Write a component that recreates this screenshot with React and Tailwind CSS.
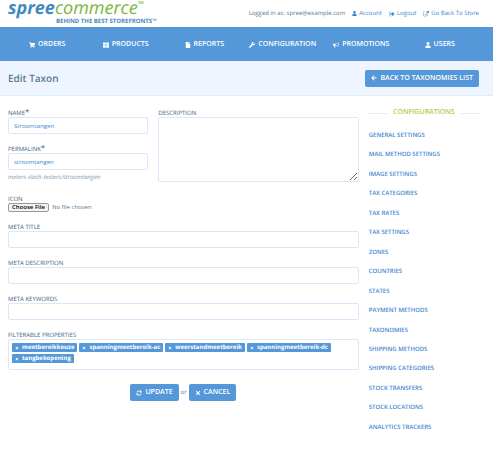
import React from "react";
import { FaShoppingCart, FaThLarge, FaFile, FaWrench, FaUser, FaArrowLeft, FaTimes } from "react-icons/fa";

function Glyph({ d, className }) {
  return (
    <svg viewBox="0 0 1792 1792" fill="currentColor" aria-hidden="true" className={className}>
      <path d={d} />
    </svg>
  );
}

const REFRESH =
  "M1639 1056q0 5-1 7-64 268-268 434.5t-478 166.5q-146 0-282.5-55t-243.5-157l-129 129q-19 19-45 19t-45-19-19-45v-448q0-26 19-45t45-19h448q26 0 45 19t19 45-19 45l-137 137q71 66 161 102t187 36q134 0 250-65t186-179q11-17 53-117 8-23 30-23h192q13 0 22.5 9.5t9.5 22.5zm25-800v448q0 26-19 45t-45 19h-448q-26 0-45-19t-19-45 19-45l138-138q-148-137-349-137-134 0-250 65t-186 179q-11 17-53 117-8 23-30 23h-199q-13 0-22.5-9.5t-9.5-22.5v-7q65-268 270-434.5t480-166.5q146 0 284 55.5t245 156.5l130-129q19-19 45-19t45 19 19 45z";
const EXTERNAL =
  "M1408 928v320q0 119-84.5 203.5t-203.5 84.5h-832q-119 0-203.5-84.5t-84.5-203.5v-832q0-119 84.5-203.5t203.5-84.5h704q14 0 23 9t9 23v64q0 14-9 23t-23 9h-704q-66 0-113 47t-47 113v832q0 66 47 113t113 47h832q66 0 113-47t47-113v-320q0-14 9-23t23-9h64q14 0 23 9t9 23zm384-864v512q0 26-19 45t-45 19-45-19l-176-176-652 652q-10 10-23 10t-23-10l-114-114q-10-10-10-23t10-23l652-652-176-176q-19-19-19-45t19-45 45-19h512q26 0 45 19t19 45z";
const SIGN_OUT =
  "M704 1440q0 4 1 20t.5 26.5-3 23.5-10 19.5-20.5 6.5h-320q-119 0-203.5-84.5t-84.5-203.5v-704q0-119 84.5-203.5t203.5-84.5h320q13 0 22.5 9.5t9.5 22.5q0 4 1 20t.5 26.5-3 23.5-10 19.5-20.5 6.5h-320q-66 0-113 47t-47 113v704q0 66 47 113t113 47h312l11.5 1 11.5 3 8 5.5 7 9 2 13.5zm928-544q0 26-19 45l-544 544q-19 19-45 19t-45-19-19-45v-288h-448q-26 0-45-19t-19-45v-384q0-26 19-45t45-19h448v-288q0-26 19-45t45-19 45 19l544 544q19 19 19 45z";
const BULLHORN =
  "M1664 640q53 0 90.5 37.5t37.5 90.5-37.5 90.5-90.5 37.5v384q0 52-38 90t-90 38q-417-347-812-380-58 19-91 66t-31 100.5 40 92.5q-20 33-23 65.5t6 58 33.5 55 48 50 61.5 50.5q-29 58-111.5 83t-168.5 11.5-132-55.5q-7-23-29.5-87.5t-32-94.5-23-89-15-101 3.5-98.5 22-110.5h-122q-66 0-113-47t-47-113v-192q0-66 47-113t113-47h480q435 0 896-384 52 0 90 38t38 90v384zm-128 604v-954q-394 302-768 343v270q377 42 768 341z";

const Bullhorn = ({ className }) => <Glyph d={BULLHORN} className={className} />;

const NAV = [
  ["Orders", FaShoppingCart],
  ["Products", FaThLarge],
  ["Reports", FaFile],
  ["Configuration", FaWrench],
  ["Promotions", Bullhorn],
  ["Users", FaUser],
];

const SETTINGS = [
  "General Settings",
  "Mail Method Settings",
  "Image Settings",
  "Tax Categories",
  "Tax Rates",
  "Tax Settings",
  "Zones",
  "Countries",
  "States",
  "Payment Methods",
  "Taxonomies",
  "Shipping Methods",
  "Shipping Categories",
  "Stock Transfers",
  "Stock Locations",
  "Analytics Trackers",
];

const TAGS = ["meetbereikkeuze", "spanningmeetbereik-ac", "weerstandmeetbereik", "spanningmeetbereik-dc", "tangbekopening"];

const labelClass = "block h-[10px] text-[6px] leading-[12px] font-normal uppercase text-[#41657f]";
const inputClass =
  "block h-[17px] w-full rounded-xs border border-[#d9e8f8] bg-white px-[5px] text-[6px] text-[#3d86d0] outline-none";
const buttonClass =
  "flex h-[17px] items-center gap-[3px] rounded-xs bg-[#5498da] px-[6px] text-[7px] font-semibold uppercase text-white";

function Field({ id, label, required, value }) {
  return (
    <div>
      <label htmlFor={id} className={labelClass}>
        {label}
        {required && <span className="text-[8px] leading-none">*</span>}
      </label>
      <input id={id} type="text" defaultValue={value} className={inputClass} />
    </div>
  );
}

export default function App() {
  return (
    <div className="min-h-screen bg-white font-['Open_Sans',sans-serif] text-[#5a7a94] [text-rendering:geometricPrecision]">
      <header className="flex h-[27px] justify-between pr-3.5 pl-2">
        <a href="#" className="flex flex-col">
          <span className="flex h-4 items-start text-[18px] leading-[16px] italic">
            <span className="font-bold text-[#4389bd]">spree</span>
            <span className="text-[#7cb642]">commerce</span>
            <span className="text-[8px] leading-[10px] text-[#7cb642] not-italic">™</span>
          </span>
          <span className="pl-12 text-[6px] leading-[10px] font-bold text-[#4389bd]">BEHIND THE BEST STOREFRONTS™</span>
        </a>
        <div className="flex items-center gap-[7px] text-[6px]">
          <span>Logged in as: spree@example.com</span>
          <a href="#" className="flex items-center gap-0.5 text-[#3d86d0]">
            <FaUser className="size-[5px]" />
            Account
          </a>
          <a href="#" className="flex items-center gap-0.5 text-[#3d86d0]">
            <Glyph d={SIGN_OUT} className="size-[6px]" />
            Logout
          </a>
          <a href="#" className="flex items-center gap-0.5 text-[#3d86d0]">
            <Glyph d={EXTERNAL} className="size-[6px]" />
            Go Back To Store
          </a>
        </div>
      </header>

      <nav className="flex h-[34px] bg-[#5498da] pt-0.5 pr-3.5 pl-2">
        {NAV.map(([name, Icon]) => (
          <a
            key={name}
            href="#"
            className="flex flex-1 basis-0 items-center justify-center gap-[3px] text-[7px] font-semibold text-white uppercase"
          >
            <Icon className="size-[6px]" />
            {name}
          </a>
        ))}
      </nav>

      <div className="flex h-[35px] items-center justify-between border-b border-[#e0edf8] bg-[#eff5fe] pr-3.5 pl-2">
        <h1 className="text-[10px] font-semibold">Edit Taxon</h1>
        <button type="button" className={buttonClass}>
          <FaArrowLeft className="size-[6px]" />
          Back to taxonomies list
        </button>
      </div>

      <main className="grid grid-cols-[35fr_11fr] gap-2.5 pt-[11px] pr-3.5 pl-2">
        <form className="pb-8" onSubmit={(e) => e.preventDefault()}>
          <div className="grid grid-cols-[7fr_10fr] gap-2.5">
            <div className="flex flex-col gap-[9px]">
              <Field id="name" label="Name" required value="Stroomtangen" />
              <div>
                <Field id="permalink" label="Permalink" required value="stroomtangen" />
                <p className="mt-[3px] text-[6px] leading-[9px] text-[#7e97ac] italic">
                  meters-slash-testers/stroomtangen
                </p>
              </div>
            </div>
            <div>
              <label htmlFor="description" className={labelClass}>
                Description
              </label>
              <textarea
                id="description"
                className="block h-[65px] w-full resize rounded-xs border border-[#d9e8f8] outline-none"
              />
            </div>
          </div>

          <div className="mt-[11px] flex flex-col gap-[9px]">
            <div>
              <label htmlFor="icon" className={labelClass}>
                Icon
              </label>
              <input
                id="icon"
                type="file"
                className="block h-[9px] w-full text-[6px] leading-[9px] file:mr-[3px] file:h-[9px] file:rounded-xs file:border file:border-solid file:border-[#999] file:bg-[#f4f4f4] file:px-[3px] file:text-[6px] file:leading-[7px] file:font-semibold file:text-black"
              />
            </div>
            <Field id="meta-title" label="Meta Title" />
            <Field id="meta-description" label="Meta Description" />
            <Field id="meta-keywords" label="Meta Keywords" />
            <div>
              <span className={labelClass}>Filterable Properties</span>
              <ul className="flex min-h-[31px] flex-wrap content-start gap-x-0.5 gap-y-0.5 rounded-xs border border-[#d9e8f8] p-[3px]">
                {TAGS.map((tag) => (
                  <li
                    key={tag}
                    className="flex h-[9px] items-center gap-[3px] rounded-[1px] bg-[#5498da] px-[3px] text-[6px] leading-[9px] font-bold text-white"
                  >
                    <button type="button" aria-label={"Remove " + tag}>
                      <FaTimes className="size-[4px]" />
                    </button>
                    {tag}
                  </li>
                ))}
              </ul>
            </div>
          </div>

          <div className="mt-3.5 flex items-center justify-center gap-0.5 text-[6px]">
            <button type="submit" className={buttonClass}>
              <Glyph d={REFRESH} className="size-[6px]" />
              Update
            </button>
            or
            <button type="button" className={buttonClass}>
              <FaTimes className="size-[6px]" />
              Cancel
            </button>
          </div>
        </form>

        <aside className="flex flex-col">
          <h2 className="flex items-center gap-[5px] text-[7px] leading-[12px] font-semibold text-[#a9cf46] uppercase">
            <span className="h-px flex-1 bg-[#e0edf8]" />
            Configurations
            <span className="h-px flex-1 bg-[#e0edf8]" />
          </h2>
          <ul className="mt-2.5 flex flex-1 flex-col justify-between">
            {SETTINGS.map((name) => (
              <li key={name} className="text-[6px] leading-[12px] font-semibold uppercase">
                <a href="#" className="text-[#3d86d0]">
                  {name}
                </a>
              </li>
            ))}
          </ul>
        </aside>
      </main>
    </div>
  );
}
